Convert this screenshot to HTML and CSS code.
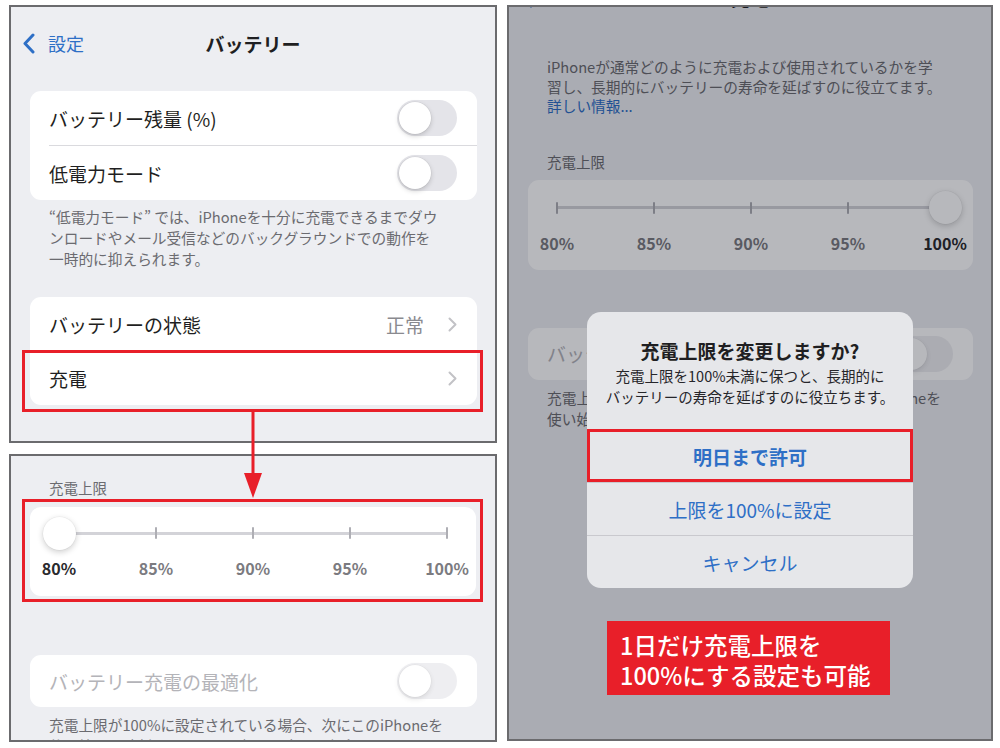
FILE: index.html
```html
<!DOCTYPE html>
<html lang="ja">
<head>
<meta charset="utf-8">
<title>バッテリー 充電上限</title>
<link rel="stylesheet" href="styles.css">
</head>
<body>
<div class="page">
  <div class="left">
    <section class="panel panel-a">
      <header class="nav">
        <div class="back">
          <svg width="13" height="21" viewBox="0 0 13 21"><path d="M11 2 L3 10.5 L11 19" fill="none" stroke="#2e6fc6" stroke-width="3" stroke-linecap="round" stroke-linejoin="round"/></svg>
          <span>設定</span>
        </div>
        <h1>バッテリー</h1>
        <div></div>
      </header>
      <div class="card">
        <div class="row"><span>バッテリー残量 (%)</span><span class="toggle"></span></div>
        <div class="sep"></div>
        <div class="row"><span>低電力モード</span><span class="toggle"></span></div>
      </div>
      <p class="foot foot-a">“低電力モード” では、iPhoneを十分に充電できるまでダウ<br>ンロードやメール受信などのバックグラウンドでの動作を<br>一時的に抑えられます。</p>
      <div class="card card-2">
        <div class="row"><span>バッテリーの状態</span><span class="value">正常<svg class="chev" width="9" height="15" viewBox="0 0 9 15"><path d="M1.5 1.5 L7.5 7.5 L1.5 13.5" fill="none" stroke="#c2c2c6" stroke-width="2" stroke-linecap="round" stroke-linejoin="round"/></svg></span></div>
        <div class="sep"></div>
        <div class="row row-last"><span>充電</span><svg class="chev" width="9" height="15" viewBox="0 0 9 15"><path d="M1.5 1.5 L7.5 7.5 L1.5 13.5" fill="none" stroke="#c2c2c6" stroke-width="2" stroke-linecap="round" stroke-linejoin="round"/></svg></div>
      </div>
      <div class="hl-charge"></div>
    </section>

    <section class="panel panel-b">
      <p class="sec-label">充電上限</p>
      <div class="mark">
        <div class="card slider-card">
          <div class="stops">
            <span class="knob"></span><span class="tick"></span><span class="tick"></span><span class="tick"></span><span class="tick"></span>
          </div>
          <div class="labels"><span class="on">80%</span><span>85%</span><span>90%</span><span>95%</span><span>100%</span></div>
        </div>
      </div>
      <div class="card disabled disabled-b">
        <div class="row"><span>バッテリー充電の最適化</span><span class="toggle"></span></div>
      </div>
      <p class="foot foot-b">充電上限が100%に設定されている場合、次にこのiPhoneを<br>使い始める時刻までの80%を超える充電を保留します。</p>
    </section>
  </div>

  <section class="panel panel-c">
    <header class="nav nav-c">
      <div class="back">
        <svg width="13" height="21" viewBox="0 0 13 21"><path d="M11 2 L3 10.5 L11 19" fill="none" stroke="#2e6fc6" stroke-width="3" stroke-linecap="round" stroke-linejoin="round"/></svg>
        <span>バッテリー</span>
      </div>
      <h1>充電</h1>
      <div></div>
    </header>
    <p class="foot intro">iPhoneが通常どのように充電および使用されているかを学<br>習し、長期的にバッテリーの寿命を延ばすのに役立てます。<br><span class="link">詳しい情報...</span></p>
    <p class="sec-label sec-label-c">充電上限</p>
    <div class="card slider-card slider-c">
      <div class="stops">
        <span class="tick"></span><span class="tick"></span><span class="tick"></span><span class="tick"></span><span class="knob"></span>
      </div>
      <div class="labels"><span>80%</span><span>85%</span><span>90%</span><span>95%</span><span class="on">100%</span></div>
    </div>
    <div class="card disabled card-c2">
      <div class="row"><span>バッテリー充電の最適化</span><span class="toggle"></span></div>
    </div>
    <p class="foot foot-c">充電上限が100%に設定されている場合、次にこのiPhoneを<br>使い始める時刻までの80%を超える充電を保留します。</p>

    <div class="dim"></div>

    <div class="dialog">
      <h2>充電上限を変更しますか?</h2>
      <p>充電上限を100%未満に保つと、長期的に<br>バッテリーの寿命を延ばすのに役立ちます。</p>
      <div class="act primary">明日まで許可</div>
      <div class="act">上限を100%に設定</div>
      <div class="act">キャンセル</div>
    </div>

    <div class="note">1日だけ充電上限を<br>100%にする設定も可能</div>
  </section>

  <svg class="arrow" width="20" height="90" viewBox="0 0 20 90"><line x1="10" y1="0" x2="10" y2="66" stroke="#e81f29" stroke-width="3"/><path d="M1 62 L19 62 L10 87 Z" fill="#e81f29"/></svg>
</div>
</body>
</html>
```

FILE: styles.css
```css
* { box-sizing: border-box; margin: 0; padding: 0; }

body {
  margin: 0;
  background: #ffffff;
  font-family: "Noto Sans CJK JP", "Noto Sans", sans-serif;
  color: #1f1f22;
}

.page {
  position: relative;
  width: 1000px;
  height: 748px;
  display: flex;
  gap: 10px;
  padding: 5px 0 0 9px;
}

.left {
  display: flex;
  flex-direction: column;
  gap: 11px;
  width: 488px;
}

.panel {
  position: relative;
  border: 2px solid #6b6b6e;
  background: #edeef2;
  overflow: hidden;
}

.panel-a { height: 438px; }
.panel-b { height: 288px; }
.panel-c { width: 486px; height: 736px; }

/* navigation bar */
.nav {
  height: 72px;
  display: grid;
  grid-template-columns: 1fr auto 1fr;
  align-items: center;
  padding: 0 11px;
}

.back {
  display: flex;
  align-items: center;
  gap: 13px;
  color: #2e6fc6;
  font-size: 18px;
}

.nav h1 {
  font-size: 19px;
  font-weight: 700;
  color: #1f1f22;
}

.nav-c { margin-top: -46px; }

/* grouped cards */
.card {
  margin: 0 18px 0 19px;
  background: #ffffff;
  border-radius: 11px;
}

.panel-a .card { margin-top: 12px; }
.panel-a .card-2 { margin-top: 28px; }

.row {
  height: 54px;
  display: flex;
  align-items: center;
  justify-content: space-between;
  padding: 0 20px 0 19px;
  font-size: 19px;
  white-space: nowrap;
}

.row-last { height: 53px; }

.sep {
  height: 1px;
  margin-left: 19px;
  background: #dadade;
}

.value {
  display: flex;
  align-items: center;
  gap: 24px;
  color: #8a8a8f;
}

.chev { display: block; }

/* toggle (off) */
.toggle {
  position: relative;
  width: 60px;
  height: 36px;
  border-radius: 18px;
  background: #e4e4e9;
}

.toggle::after {
  content: "";
  position: absolute;
  left: 2px;
  top: 2px;
  width: 32px;
  height: 32px;
  border-radius: 50%;
  background: #ffffff;
  box-shadow: 0 2px 5px rgba(0, 0, 0, 0.18), 0 0 0 0.5px rgba(0, 0, 0, 0.06);
}

/* footnotes */
.foot {
  padding: 0 10px 0 38px;
  font-size: 14.7px;
  line-height: 21px;
  color: #6b6b70;
  white-space: nowrap;
}

.foot-a { margin-top: 6px; }
.foot-b { margin-top: 7px; }

/* section label */
.sec-label {
  padding: 22px 0 0 38px;
  font-size: 14.5px;
  line-height: 20px;
  color: #6b6b70;
}

/* red highlight frame around the slider card */
.mark {
  margin: 1px 12px 0 11px;
  padding: 5px 4px 3px 5px;
  border: 3px solid #e81f29;
}

.mark .card { margin: 0; }

/* slider card */
.slider-card {
  height: 89px;
  padding-top: 9px;
}

.stops {
  position: relative;
  display: grid;
  grid-template-columns: repeat(5, 58px);
  column-gap: 39px;
  justify-items: center;
  align-items: center;
  height: 34px;
}

.stops::before {
  content: "";
  position: absolute;
  left: 29px;
  right: 29px;
  top: 15.5px;
  height: 3px;
  background: #d3d3d8;
}

.tick {
  position: relative;
  width: 2.5px;
  height: 12px;
  background: #aeaeb4;
  border-radius: 1px;
}

.knob {
  position: relative;
  width: 33px;
  height: 33px;
  border-radius: 50%;
  background: #ffffff;
  box-shadow: 0 2px 6px rgba(0, 0, 0, 0.2), 0 0 0 0.5px rgba(0, 0, 0, 0.05);
}

.labels {
  display: grid;
  grid-template-columns: repeat(5, 58px);
  column-gap: 39px;
  justify-items: center;
  margin-top: 8px;
  font-size: 16px;
  line-height: 20px;
  font-weight: 700;
  color: #7b7b80;
  white-space: nowrap;
}

.labels .on { color: #2a2a2d; }

.disabled { margin-top: 59px; }
.disabled-b { margin-top: 53px; }
.disabled .row { height: 52px; color: #b4b4b9; }
.disabled .toggle { opacity: 0.6; }

/* right panel */
.intro { margin-top: 24px; line-height: 19.5px; }
.link { color: #2e6fc6; }
.sec-label-c { padding-top: 36px; }
.slider-c { margin-top: 8px; height: 90px; padding-top: 11px; }
.card-c2 { margin-top: 58px; }
.foot-c { margin-top: 7px; }

.dim {
  position: absolute;
  inset: 0;
  background: rgba(6, 10, 24, 0.29);
  z-index: 1;
}

.dialog {
  position: absolute;
  left: 78px;
  top: 305px;
  width: 326px;
  background: #e6e7ea;
  border-radius: 14px;
  text-align: center;
  z-index: 2;
}

.dialog h2 {
  padding-top: 27px;
  font-size: 19px;
  line-height: 24px;
  font-weight: 700;
  color: #1f1f22;
}

.dialog p {
  margin-top: 2px;
  padding-bottom: 22px;
  font-size: 14.5px;
  line-height: 21px;
  color: #26262a;
}

.act {
  height: 53px;
  display: flex;
  align-items: center;
  justify-content: center;
  border-top: 1px solid #c9c9ce;
  font-size: 19px;
  color: #2e6fc6;
}

.act.primary {
  font-weight: 700;
  outline: 3px solid #e81f29;
  outline-offset: -3px;
}

.note {
  position: absolute;
  left: 98px;
  top: 614px;
  width: 283px;
  height: 74px;
  padding: 9px 0 0 13px;
  background: #e81f29;
  color: #ffffff;
  font-size: 23.5px;
  line-height: 30px;
  font-weight: 500;
  white-space: nowrap;
  z-index: 2;
}

/* annotations */
.hl-charge {
  position: absolute;
  left: 11px;
  top: 343px;
  width: 461px;
  height: 62px;
  border: 3px solid #e81f29;
}

.arrow {
  position: absolute;
  left: 243px;
  top: 411px;
  z-index: 3;
}
```
